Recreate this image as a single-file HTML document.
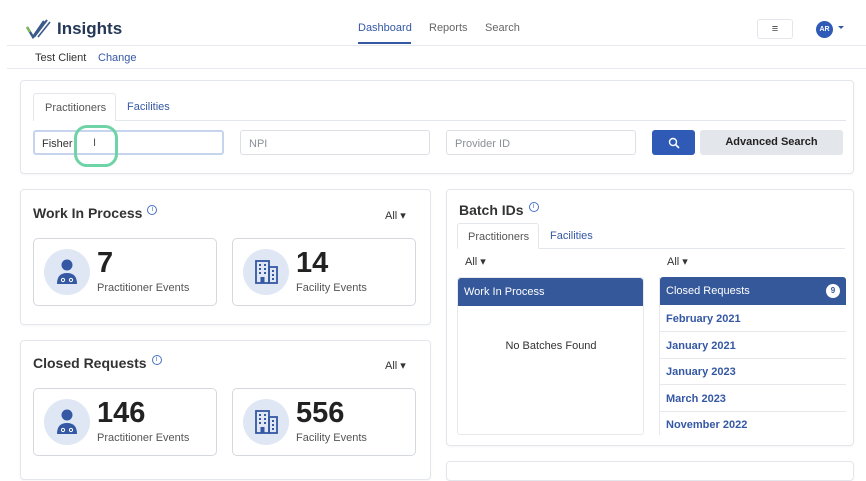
<!DOCTYPE html>
<html><head><meta charset="utf-8"><style>
*{box-sizing:border-box;margin:0;padding:0}
body{width:866px;height:464px;overflow:hidden;background:#fff;font-family:"Liberation Sans",sans-serif;color:#2b2b2b;position:relative}
.a{position:absolute}
.card{position:absolute;border:1px solid #e3e6ea;border-radius:4px;background:#fff;box-shadow:0 1px 2px rgba(0,0,0,.04)}
.inp{position:absolute;border:1px solid #dcdfe4;border-radius:3px;height:25px;font-size:11px;color:#8a8f96;padding:7px 8px}
.blue{color:#3558a4}
.stat{position:absolute;border:1px solid #d5d8dd;border-radius:5px;width:184px;height:68px}
.circ{position:absolute;left:10px;top:10px;width:46px;height:46px;border-radius:50%;background:#dfe7f5}
.num{position:absolute;left:63px;top:8px;font-size:29px;font-weight:bold;color:#222}
.lbl{position:absolute;left:63px;top:43px;font-size:11px;color:#555}
.ttl{position:absolute;font-size:14px;font-weight:bold;color:#333}
.info{display:inline-block;width:10px;height:10px;border:1px solid #4a72c4;border-radius:50%;font-size:7px;color:#4a72c4;text-align:center;line-height:8px;vertical-align:top;margin-left:5px;font-weight:normal}
.all{position:absolute;font-size:11px;color:#333}
.row{position:absolute;left:0;width:186px;height:26.5px;border-bottom:1px solid #e6e8eb;font-size:11px;font-weight:bold;color:#3558a4;padding:8px 6px}
</style></head><body>
<svg class="a" style="left:26px;top:19px" width="26" height="20" viewBox="0 0 26 20"><path d="M1 8 L7 18 L18 2" stroke="#3a5a8a" stroke-width="2.4" fill="none"/><path d="M8 18 L21 1" stroke="#3a5a8a" stroke-width="2" fill="none"/><path d="M12 18 L24 3" stroke="#3a5a8a" stroke-width="1.6" fill="none"/><path d="M1 8 L4 13" stroke="#7cbf4a" stroke-width="2" fill="none"/></svg>
<div class="a" style="left:57px;top:19px;font-size:17px;font-weight:bold;color:#253858">Insights</div>
<div class="a blue" style="left:358px;top:22px;font-size:11px">Dashboard</div>
<div class="a" style="left:358px;top:42px;width:53px;height:2px;background:#3558a4"></div>
<div class="a" style="left:429px;top:22px;font-size:11px;color:#666">Reports</div>
<div class="a" style="left:485px;top:22px;font-size:11px;color:#666">Search</div>
<div class="a" style="left:757px;top:19px;width:36px;height:20px;border:1px solid #e3e6ea;border-radius:3px;text-align:center;font-size:11px;line-height:18px;color:#444">≡</div>
<div class="a" style="left:816px;top:21px;width:17px;height:17px;border-radius:50%;background:#2f5bb7;color:#fff;font-size:7px;font-weight:bold;text-align:center;line-height:17px">AR</div>
<div class="a" style="left:838px;top:26px;width:0;height:0;border-left:3px solid transparent;border-right:3px solid transparent;border-top:3px solid #3558a4"></div>
<div class="a" style="left:7px;top:45px;width:859px;height:1px;background:#e6e9ee"></div>
<div class="a" style="left:35px;top:52px;font-size:11px;color:#333">Test Client</div>
<div class="a blue" style="left:98px;top:52px;font-size:11px">Change</div>
<div class="a" style="left:7px;top:68px;width:859px;height:1px;background:#e6e9ee"></div>
<div class="card" style="left:20px;top:80px;width:834px;height:94px">
  <div class="a" style="left:12px;top:12px;width:83px;height:28px;border:1px solid #e3e6ea;border-bottom:none;border-radius:3px 3px 0 0;background:#fff;font-size:11px;color:#555;padding:8px 0 0 11px;z-index:2">Practitioners</div>
  <div class="a blue" style="left:106px;top:20px;font-size:11px">Facilities</div>
  <div class="a" style="left:12px;top:39px;width:813px;height:1px;background:#e3e6ea"></div>
</div>
<div class="inp" style="left:33px;top:130px;width:191px;border:2px solid #c7d4ee;color:#333;padding:6px 7px">Fisher</div>
<div class="a" style="left:74px;top:125px;width:44px;height:42px;border:3px solid #6fd3a8;border-radius:13px"></div>
<div class="a" style="left:93px;top:137px;font-size:11px;color:#555">I</div>
<div class="inp" style="left:240px;top:130px;width:190px">NPI</div>
<div class="inp" style="left:446px;top:130px;width:190px">Provider ID</div>
<div class="a" style="left:652px;top:130px;width:43px;height:25px;background:#2f5bb7;border-radius:3px"><svg style="position:absolute;left:16px;top:7px" width="12" height="12" viewBox="0 0 12 12"><circle cx="5" cy="5" r="3.5" stroke="#fff" stroke-width="1.4" fill="none"/><path d="M7.5 7.5 L11 11" stroke="#fff" stroke-width="1.6"/></svg></div>
<div class="a" style="left:700px;top:130px;width:143px;height:25px;background:#e3e6eb;border-radius:3px;font-size:11px;font-weight:bold;color:#222;text-align:center;line-height:25px">Advanced Search</div>
<div class="card" style="left:20px;top:189px;width:411px;height:136px"></div>
<div class="ttl" style="left:33px;top:205px">Work In Process<span class="info">i</span></div>
<div class="all" style="left:385px;top:209px">All ▾</div>
<div class="stat" style="left:33px;top:238px"><div class="circ"></div><svg class="a" style="left:22px;top:19px" width="22" height="28" viewBox="0 0 22 28"><circle cx="11" cy="7" r="5.5" fill="#3558a4"/><path d="M1 26 Q1 15 11 15 Q21 15 21 26 Z" fill="#3558a4"/><circle cx="7" cy="22" r="1.6" stroke="#fff" fill="none"/><circle cx="15" cy="22" r="1.6" stroke="#fff" fill="none"/></svg><div class="num">7</div><div class="lbl">Practitioner Events</div></div>
<div class="stat" style="left:232px;top:238px"><div class="circ"></div><svg class="a" style="left:21px;top:20px" width="26" height="26" viewBox="0 0 26 26"><rect x="2" y="2" width="13" height="22" fill="none" stroke="#3558a4" stroke-width="1.8"/><rect x="15" y="8" width="8" height="16" fill="none" stroke="#3558a4" stroke-width="1.8"/><path d="M5 6h2M10 6h2M5 10h2M10 10h2M5 14h2M10 14h2M18 12h2M18 16h2M18 20h2" stroke="#3558a4" stroke-width="2"/><rect x="6.5" y="18" width="4" height="6" fill="#3558a4"/></svg><div class="num">14</div><div class="lbl">Facility Events</div></div>
<div class="card" style="left:20px;top:340px;width:411px;height:140px"></div>
<div class="ttl" style="left:33px;top:355px">Closed Requests<span class="info">i</span></div>
<div class="all" style="left:385px;top:359px">All ▾</div>
<div class="stat" style="left:33px;top:388px"><div class="circ"></div><svg class="a" style="left:22px;top:19px" width="22" height="28" viewBox="0 0 22 28"><circle cx="11" cy="7" r="5.5" fill="#3558a4"/><path d="M1 26 Q1 15 11 15 Q21 15 21 26 Z" fill="#3558a4"/><circle cx="7" cy="22" r="1.6" stroke="#fff" fill="none"/><circle cx="15" cy="22" r="1.6" stroke="#fff" fill="none"/></svg><div class="num">146</div><div class="lbl">Practitioner Events</div></div>
<div class="stat" style="left:232px;top:388px"><div class="circ"></div><svg class="a" style="left:21px;top:20px" width="26" height="26" viewBox="0 0 26 26"><rect x="2" y="2" width="13" height="22" fill="none" stroke="#3558a4" stroke-width="1.8"/><rect x="15" y="8" width="8" height="16" fill="none" stroke="#3558a4" stroke-width="1.8"/><path d="M5 6h2M10 6h2M5 10h2M10 10h2M5 14h2M10 14h2M18 12h2M18 16h2M18 20h2" stroke="#3558a4" stroke-width="2"/><rect x="6.5" y="18" width="4" height="6" fill="#3558a4"/></svg><div class="num">556</div><div class="lbl">Facility Events</div></div>
<div class="card" style="left:446px;top:189px;width:408px;height:257px"></div>
<div class="card" style="left:446px;top:461px;width:408px;height:20px"></div>
<div class="ttl" style="left:459px;top:202px">Batch IDs<span class="info">i</span></div>
<div class="a" style="left:457px;top:223px;width:82px;height:26px;border:1px solid #e3e6ea;border-bottom:1px solid #fff;border-radius:3px 3px 0 0;background:#fff;font-size:11px;color:#555;padding:7px 0 0 10px;z-index:2">Practitioners</div>
<div class="a blue" style="left:550px;top:230px;font-size:11px">Facilities</div>
<div class="a" style="left:457px;top:248px;width:388px;height:1px;background:#e3e6ea"></div>
<div class="all" style="left:465px;top:255px">All ▾</div>
<div class="all" style="left:667px;top:255px">All ▾</div>
<div class="a" style="left:457px;top:277px;width:187px;height:158px;border:1px solid #e6e8eb;border-radius:3px">
  <div style="height:28px;background:#35589a;border-radius:3px 3px 0 0;color:#fff;font-size:11px;padding:8px 6px">Work In Process</div>
  <div style="position:absolute;left:0;width:186px;top:62px;text-align:center;font-size:11px;color:#333">No Batches Found</div>
</div>
<div class="a" style="left:659px;top:277px;width:187px;height:158px;border-left:1px solid #e6e8eb">
  <div style="height:28px;background:#35589a;border-radius:3px 3px 0 0;color:#fff;font-size:11px;padding:8px 6px;position:relative">Closed Requests<span style="position:absolute;right:6px;top:7px;width:14px;height:14px;border-radius:50%;background:#fff;color:#35589a;font-size:8px;font-weight:bold;text-align:center;line-height:14px">9</span></div>
  <div class="row" style="top:28px">February 2021</div>
  <div class="row" style="top:55px">January 2021</div>
  <div class="row" style="top:81px">January 2023</div>
  <div class="row" style="top:108px">March 2023</div>
  <div class="row" style="top:134px;border-bottom:none">November 2022</div>
</div>
</body></html>
